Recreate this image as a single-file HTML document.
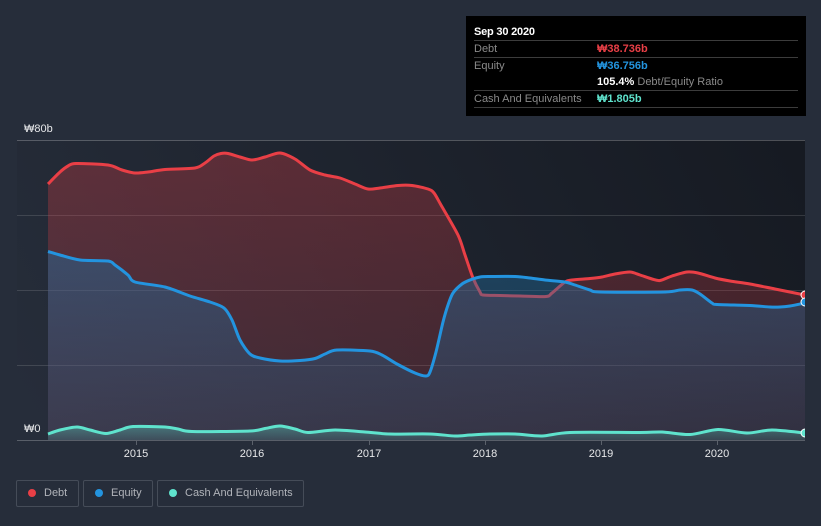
<!DOCTYPE html>
<html><head><meta charset="utf-8"><style>
html,body{margin:0;padding:0}
body{width:821px;height:526px;background:#262d3a;position:relative;overflow:hidden;font-family:"Liberation Sans","Noto Sans CJK KR",sans-serif}
svg{position:absolute;left:0;top:0}
.tip{position:absolute;left:466px;top:16px;width:340px;height:100px;background:#000}
.t{position:absolute;font-size:11px;line-height:14px;white-space:nowrap;color:#8a8a8a}
.l{position:absolute;left:8px;width:324px;height:1px;background:#3c3c3c}
.lg{position:absolute;top:480px;height:25px;border:1px solid #454c58;border-radius:2px}
.lg i{position:absolute;left:11px;top:8px;width:8px;height:8px;border-radius:50%}
.lg span{position:absolute;left:27px;top:5px;font-size:11px;line-height:14px;color:#b1b4ba;white-space:nowrap}
</style></head><body>
<svg width="821" height="526" viewBox="0 0 821 526">
<defs>
<linearGradient id="bg" gradientUnits="userSpaceOnUse" x1="60" y1="480" x2="780" y2="110"><stop offset="0" stop-color="#262d3a"/><stop offset="1" stop-color="#161a22"/></linearGradient>
<linearGradient id="rd" gradientUnits="userSpaceOnUse" x1="0" y1="150" x2="0" y2="440"><stop offset="0" stop-color="#e93f46" stop-opacity=".3"/><stop offset="1" stop-color="#e93f46" stop-opacity=".14"/></linearGradient>
<linearGradient id="bl" gradientUnits="userSpaceOnUse" x1="0" y1="250" x2="0" y2="440"><stop offset="0" stop-color="#1f6ea0" stop-opacity=".45"/><stop offset="1" stop-color="#1f6ea0" stop-opacity=".18"/></linearGradient>
<linearGradient id="tl" gradientUnits="userSpaceOnUse" x1="0" y1="426" x2="0" y2="440"><stop offset="0" stop-color="#5fe3cd" stop-opacity=".35"/><stop offset="1" stop-color="#5fe3cd" stop-opacity=".12"/></linearGradient>
<clipPath id="c"><rect x="17" y="130" width="788" height="311"/></clipPath>
</defs>
<rect x="17" y="140" width="788" height="300" fill="url(#bg)"/>
<g stroke="#fff" stroke-opacity=".13" stroke-width="1"><path d="M17 215.5H805M17 290.5H805M17 365.5H805"/></g>
<g stroke="#fff" stroke-opacity=".24" stroke-width="1"><path d="M17 140.5H805M17 440.5H805"/></g>
<g stroke="#5b616b" stroke-width="1"><path d="M136.5 440V445M252.5 440V445M369.5 440V445M485.5 440V445M601.5 440V445M717.5 440V445"/></g>
<path class="s" data-close="1" fill="url(#rd)" d="M48 184L60 172L68 166L76 163.5L108 165L122 170L135 173L148 172L165 169.5L195 168L205 163L214 156L221 153.5L228 153.5L240 157L252 160L265 157L280 153L295 159L310 170L325 175L340 178L355 184L368 189L380 188L398 185.5L412 185.5L428 189L434 193L441 205L458 235L465 255L473 278L480 292L483 295L500 295.5L520 296L546 296.5L552 293L565 282L572 280L590 278.5L602 277L615 274L630 272L640 275L652 279L660 280.5L672 276L687 272L698 273L715 278L730 281L750 284L775 289L805 295"/>
<path class="s" fill="none" stroke="#e93f46" stroke-width="3" stroke-linejoin="round" clip-path="url(#c)" d="M48 184L60 172L68 166L76 163.5L108 165L122 170L135 173L148 172L165 169.5L195 168L205 163L214 156L221 153.5L228 153.5L240 157L252 160L265 157L280 153L295 159L310 170L325 175L340 178L355 184L368 189L380 188L398 185.5L412 185.5L428 189L434 193L441 205L458 235L465 255L473 278L480 292L483 295L500 295.5L520 296L546 296.5L552 293L565 282L572 280L590 278.5L602 277L615 274L630 272L640 275L652 279L660 280.5L672 276L687 272L698 273L715 278L730 281L750 284L775 289L805 295"/>
<path class="s" data-close="1" fill="url(#bl)" d="M48 251.5L60 255L80 260L108 261L115 265L128 275L135 282L165 287L190 296L210 302L224 308L232 320L240 340L250 354L260 358L280 361L300 360.5L315 358.5L325 354L337 350L370 351L382 355L397 364L415 373L426 376L430 372L436 352L443 322L448 305L453 293L462 284L470 280L480 277L490 276.5L515 276.5L530 278L545 280L565 282L575 285L590 290L600 292L665 292L680 290L692 290L700 294L712 303L717 304.5L750 305.5L770 307L780 307L790 306L805 303"/>
<path class="s" fill="none" stroke="#2394df" stroke-width="3" stroke-linejoin="round" clip-path="url(#c)" d="M48 251.5L60 255L80 260L108 261L115 265L128 275L135 282L165 287L190 296L210 302L224 308L232 320L240 340L250 354L260 358L280 361L300 360.5L315 358.5L325 354L337 350L370 351L382 355L397 364L415 373L426 376L430 372L436 352L443 322L448 305L453 293L462 284L470 280L480 277L490 276.5L515 276.5L530 278L545 280L565 282L575 285L590 290L600 292L665 292L680 290L692 290L700 294L712 303L717 304.5L750 305.5L770 307L780 307L790 306L805 303"/>
<path class="s" data-close="1" fill="url(#tl)" d="M48 434L60 430L77 427L90 430L106 433.5L120 430L133 426.5L165 427L178 429L192 431.5L250 431L265 428.5L280 426L295 429L308 432.5L335 430L365 432L390 434L430 434L455 436L470 435L490 434L515 434L542 436L570 432.5L640 432.5L662 432L690 434.5L718 429.5L747 433L772 430L805 433"/>
<path class="s" fill="none" stroke="#5fe3cd" stroke-width="3" stroke-linejoin="round" clip-path="url(#c)" d="M48 434L60 430L77 427L90 430L106 433.5L120 430L133 426.5L165 427L178 429L192 431.5L250 431L265 428.5L280 426L295 429L308 432.5L335 430L365 432L390 434L430 434L455 436L470 435L490 434L515 434L542 436L570 432.5L640 432.5L662 432L690 434.5L718 429.5L747 433L772 430L805 433"/>
<g clip-path="url(#c)" stroke="#fff" stroke-width="1">
<circle cx="805" cy="295" r="4" fill="#e93f46"/>
<circle cx="805" cy="302" r="4" fill="#2394df"/>
<circle cx="805" cy="433" r="4" fill="#5fe3cd"/>
</g>
<g font-family="'Liberation Sans','Noto Sans CJK KR',sans-serif" font-size="11" fill="#e6e7e9">
<text x="24" y="132">₩80b</text>
<text x="24" y="432">₩0</text>
<g text-anchor="middle"><text x="136" y="457">2015</text><text x="252" y="457">2016</text><text x="369" y="457">2017</text><text x="485" y="457">2018</text><text x="601" y="457">2019</text><text x="717" y="457">2020</text></g>
</g>
</svg>
<div class="tip">
<div class="t" style="left:8px;top:9px;color:#fff;font-weight:bold;letter-spacing:-.2px">Sep 30 2020</div>
<div class="l" style="top:24px"></div>
<div class="t" style="left:8px;top:26px">Debt</div>
<div class="t" style="left:131px;top:26px;color:#e93f46;font-weight:bold">₩38.736b</div>
<div class="l" style="top:41px"></div>
<div class="t" style="left:8px;top:43px">Equity</div>
<div class="t" style="left:131px;top:43px;color:#2394df;font-weight:bold">₩36.756b</div>
<div class="t" style="left:131px;top:59px"><b style="color:#fff">105.4%</b> Debt/Equity Ratio</div>
<div class="l" style="top:74px"></div>
<div class="t" style="left:8px;top:76px">Cash And Equivalents</div>
<div class="t" style="left:131px;top:76px;color:#5fe3cd;font-weight:bold">₩1.805b</div>
<div class="l" style="top:91px"></div>
</div>
<div class="lg" style="left:16px;width:61px"><i style="background:#e93f46"></i><span>Debt</span></div>
<div class="lg" style="left:83px;width:68px"><i style="background:#2394df"></i><span>Equity</span></div>
<div class="lg" style="left:157px;width:145px"><i style="background:#5fe3cd"></i><span>Cash And Equivalents</span></div>
<script>
document.querySelectorAll('path.s').forEach(function(el){
  var n=el.getAttribute('d').match(/[\d.]+/g).map(Number),p=[],i;
  for(i=0;i<n.length;i+=2)p.push([n[i],n[i+1]]);
  var d='M'+p[0][0]+' '+p[0][1],k=1/7;
  for(i=0;i<p.length-1;i++){
    var a=p[i-1]||p[i],b=p[i],c=p[i+1],e=p[i+2]||c;
    d+='C'+(b[0]+(c[0]-a[0])*k).toFixed(2)+' '+(b[1]+(c[1]-a[1])*k).toFixed(2)+' '+(c[0]-(e[0]-b[0])*k).toFixed(2)+' '+(c[1]-(e[1]-b[1])*k).toFixed(2)+' '+c[0]+' '+c[1];
  }
  if(el.getAttribute('data-close'))d+='V440H48Z';
  el.setAttribute('d',d);
});
</script>
</body></html>
